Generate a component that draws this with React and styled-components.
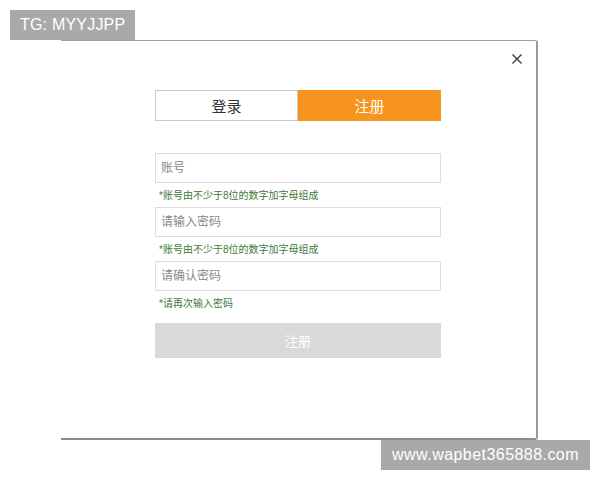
import React from 'react';
import styled, { createGlobalStyle } from 'styled-components';

const GlobalStyle = createGlobalStyle`
  html, body {
    margin: 0;
    padding: 0;
    background: #ffffff;
    font-family: "Liberation Sans", "Noto Sans CJK SC", sans-serif;
  }
`;

const S = {
  Page: styled.div`
    position: relative;
    width: 600px;
    height: 480px;
    overflow: hidden;
    background: #ffffff;
    padding: 40px 0 0 61px;
    box-sizing: border-box;
  `,
  Mark: styled.div`
    position: absolute;
    ${p => (p.$bottom ? 'right: 10px; bottom: 10px; padding: 0 11px; letter-spacing: 0.45px;' : 'left: 10px; top: 10px; padding: 0 10px; letter-spacing: 0.2px;')}
    height: 30px;
    background: #a9a9a9;
    color: #ffffff;
    font-size: 16px;
    line-height: 30px;
  `,
  Dialog: styled.div`
    width: 477px;
    height: 400px;
    box-sizing: border-box;
    border-top: 1px solid #a0a0a0;
    border-right: 2px solid #9a9a9a;
    border-bottom: 2px solid #8c8c8c;
    border-radius: 0 3px 3px 0;
    background: #ffffff;
    display: flex;
    flex-direction: column;
  `,
  CloseRow: styled.div`
    height: 49px;
    display: flex;
    justify-content: flex-end;
    align-items: flex-start;
    padding: 12px 13px 0 0;
    box-sizing: border-box;
  `,
  Close: styled.button`
    width: 12px;
    height: 12px;
    padding: 0;
    border: none;
    background: none;
    display: flex;
    cursor: pointer;
  `,
  Form: styled.div`
    width: 286px;
    margin-left: 94px;
    display: flex;
    flex-direction: column;
  `,
  Tabs: styled.div`
    display: flex;
    height: 31px;
    margin-bottom: 32px;
  `,
  Tab: styled.div`
    flex: 1;
    box-sizing: border-box;
    display: flex;
    align-items: center;
    justify-content: center;
    font-size: 15px;
    color: ${p => (p.$active ? '#ffffff' : '#333333')};
    background: ${p => (p.$active ? '#f7941d' : '#ffffff')};
    border: 1px solid ${p => (p.$active ? '#f7941d' : '#c8c8c8')};
  `,
  Input: styled.input`
    height: 30px;
    box-sizing: border-box;
    border: 1px solid #dcdcdc;
    padding: 0 5px;
    font-family: inherit;
    font-size: 12px;
    color: #333;
    outline: none;
    &::placeholder {
      color: #8a8a8a;
    }
  `,
  Hint: styled.div`
    height: 24px;
    line-height: 26px;
    padding-left: 4px;
    font-size: 10px;
    color: #3d7a3a;
  `,
  Submit: styled.button`
    margin-top: 8px;
    height: 35px;
    border: none;
    background: #d9d9d9;
    color: #ffffff;
    font-family: inherit;
    font-size: 13px;
    cursor: not-allowed;
  `,
};

const fields = [
  { placeholder: '账号', type: 'text', hint: '*账号由不少于8位的数字加字母组成' },
  { placeholder: '请输入密码', type: 'password', hint: '*账号由不少于8位的数字加字母组成' },
  { placeholder: '请确认密码', type: 'password', hint: '*请再次输入密码' },
];

const App = () => (
  <>
    <GlobalStyle />
    <S.Page>
      <S.Dialog>
        <S.CloseRow>
          <S.Close aria-label="关闭">
            <svg width="12" height="12" viewBox="0 0 12 12">
              <path d="M1.5 1.5 L10.5 10.5 M10.5 1.5 L1.5 10.5" stroke="#333" strokeWidth="1.3" fill="none" />
            </svg>
          </S.Close>
        </S.CloseRow>
        <S.Form>
          <S.Tabs>
            <S.Tab>登录</S.Tab>
            <S.Tab $active>注册</S.Tab>
          </S.Tabs>
          {fields.map((f, i) => (
            <React.Fragment key={i}>
              <S.Input type={f.type} placeholder={f.placeholder} />
              <S.Hint>{f.hint}</S.Hint>
            </React.Fragment>
          ))}
          <S.Submit>注册</S.Submit>
        </S.Form>
      </S.Dialog>
      <S.Mark>TG: MYYJJPP</S.Mark>
      <S.Mark $bottom>www.wapbet365888.com</S.Mark>
    </S.Page>
  </>
);

export default App;
